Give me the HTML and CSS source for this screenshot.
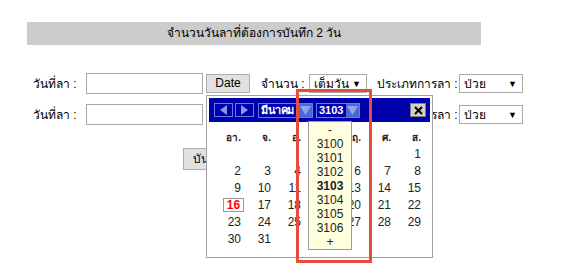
FILE: index.html
```html
<!DOCTYPE html>
<html lang="th">
<head>
    <meta charset="UTF-8">
    <title>บันทึกวันลา</title>
    <link rel="stylesheet" href="styles.css">
</head>
<body>
    <div class="page">
        <div class="title-bar">จำนวนวันลาที่ต้องการบันทึก 2 วัน</div>

        <div class="form-row first">
            <span class="label">วันที่ลา :</span>
            <span class="text-box"></span>
            <span class="btn date-btn">Date</span>
            <span class="label amount">จำนวน :</span>
            <span class="select amount-sel"><em>เต็มวัน</em><b>▼</b></span>
            <span class="label type">ประเภทการลา :</span>
            <span class="select type-sel"><em>ป่วย</em><b>▼</b></span>
        </div>

        <div class="form-row">
            <span class="label">วันที่ลา :</span>
            <span class="text-box"></span>
            <span class="btn date-btn">Date</span>
            <span class="label amount">จำนวน :</span>
            <span class="select amount-sel"><em>เต็มวัน</em><b>▼</b></span>
            <span class="label type">ประเภทการลา :</span>
            <span class="select type-sel"><em>ป่วย</em><b>▼</b></span>
        </div>

        <div class="form-actions">
            <span class="btn save-btn">บันทึก</span>
        </div>
    </div>

    <!-- popup calendar -->
    <div class="cal">
        <div class="cal-head">
            <span class="nav-btn"><svg width="11" height="10" viewBox="0 0 11 10"><polygon points="9,0 9,10 2,5" fill="#7f9be6"/></svg></span>
            <span class="nav-btn"><svg width="11" height="10" viewBox="0 0 11 10"><polygon points="2,0 2,10 9,5" fill="#7f9be6"/></svg></span>
            <span class="head-sel month"><em>มีนาคม</em><i><svg width="11" height="9" viewBox="0 0 11 9"><polygon points="0,0 11,0 5.5,9" fill="#8ea6e8"/></svg></i></span>
            <span class="head-sel year"><em>3103</em><i><svg width="11" height="9" viewBox="0 0 11 9"><polygon points="0,0 11,0 5.5,9" fill="#8ea6e8"/></svg></i></span>
            <span class="close-btn"><svg width="9" height="9" viewBox="0 0 9 9"><path d="M1 1L8 8M8 1L1 8" stroke="#000" stroke-width="2"/></svg></span>
        </div>
        <table class="cal-grid">
            <tr class="dow"><td>อา.</td><td>จ.</td><td>อ.</td><td>พ.</td><td>พฤ.</td><td>ศ.</td><td>ส.</td></tr>
            <tr><td></td><td></td><td></td><td></td><td></td><td></td><td>1</td></tr>
            <tr><td>2</td><td>3</td><td>4</td><td>5</td><td>6</td><td>7</td><td>8</td></tr>
            <tr><td>9</td><td>10</td><td>11</td><td>12</td><td>13</td><td>14</td><td>15</td></tr>
            <tr><td><span class="today">16</span></td><td>17</td><td>18</td><td>19</td><td>20</td><td>21</td><td>22</td></tr>
            <tr><td>23</td><td>24</td><td>25</td><td>26</td><td>27</td><td>28</td><td>29</td></tr>
            <tr><td>30</td><td>31</td><td></td><td></td><td></td><td></td><td></td></tr>
        </table>

        <div class="year-list">
            <div>-</div>
            <div>3100</div>
            <div>3101</div>
            <div>3102</div>
            <div class="cur">3103</div>
            <div>3104</div>
            <div>3105</div>
            <div>3106</div>
            <div>+</div>
        </div>
    </div>

    <div class="mark"></div>
</body>
</html>
```

FILE: styles.css
```css
body {
    margin: 0;
    font-family: Tahoma, "Liberation Sans", "Noto Sans", sans-serif;
    font-size: 12px;
    color: #000;
    background: #fff;
    white-space: nowrap;
}
.page {
    padding-top: 22px;
}
.title-bar {
    margin-left: 27px;
    width: 454px;
    height: 23px;
    line-height: 23px;
    background: #cccccc;
    text-align: center;
}
.form-row {
    display: flex;
    align-items: center;
    height: 21px;
    margin-top: 10px;
    padding-left: 33px;
}
.form-row.first {
    margin-top: 28px;
}
.label {
    width: 53px;
    flex: none;
}
.text-box {
    flex: none;
    width: 115px;
    height: 19px;
    border: 1px solid #a9a9a9;
}
.btn {
    flex: none;
    background: #e1e1e1;
    border: 1px solid #adadad;
    text-align: center;
    line-height: 17px;
    height: 17px;
}
.date-btn {
    width: 42px;
    margin-left: 3px;
}
.label.amount {
    margin-left: 11px;
    width: 48px;
}
.label.type {
    margin-left: 10px;
    width: 82px;
}
.select {
    flex: none;
    display: flex;
    justify-content: space-between;
    align-items: center;
    height: 17px;
    border: 1px solid #a9a9a9;
    padding: 0 5px 0 4px;
    font-size: 12px;
    overflow: hidden;
}
.select em {
    font-style: normal;
}
.select b {
    font-size: 9px;
}
.amount-sel {
    width: 47px;
}
.type-sel {
    width: 53px;
}
.form-actions {
    margin-top: 23px;
    padding-left: 183px;
}
.save-btn {
    display: inline-block;
    width: 48px;
    height: 20px;
    line-height: 20px;
}

/* calendar popup */
.cal {
    position: absolute;
    left: 206px;
    top: 95px;
    width: 221px;
    height: 157px;
    padding: 2px;
    background: #fff;
    border: 1px solid #a0a0a0;
}
.cal-head {
    display: flex;
    align-items: center;
    height: 24px;
    padding-left: 5px;
    background: #0000aa;
}
.nav-btn {
    flex: none;
    display: flex;
    align-items: center;
    justify-content: center;
    width: 17px;
    height: 12px;
    margin-right: 2px;
    border: 1px solid #5c7cf0;
}
.head-sel {
    flex: none;
    display: flex;
    align-items: center;
    height: 13px;
    margin-left: 2px;
    border: 1px solid #5c7cf0;
    color: #fff;
    font-weight: bold;
    font-size: 11px;
    padding-left: 2px;
    overflow: hidden;
}
.head-sel em {
    font-style: normal;
    flex: 1;
}
.head-sel.month {
    width: 51px;
}
.head-sel.month em {
    letter-spacing: -0.4px;
}
.head-sel.year {
    width: 40px;
    margin-left: 3px;
}
.head-sel i {
    flex: none;
    display: flex;
    align-items: center;
    justify-content: center;
    width: 13px;
    height: 13px;
    background: #4a68d8;
}
.close-btn {
    flex: none;
    display: flex;
    align-items: center;
    justify-content: center;
    width: 14px;
    height: 12px;
    margin-left: auto;
    margin-right: 4px;
    background: #d4d0c8;
    border: 1px solid #808080;
}
.cal-grid {
    border-collapse: collapse;
    margin: 7px 0 0 6px;
    font-size: 12px;
    color: #222;
}
.cal-grid td {
    width: 26px;
    height: 17px;
    padding: 0 4px 0 0;
    text-align: right;
}
.cal-grid .dow td {
    font-weight: bold;
    font-size: 10px;
    height: 16px;
}
.today {
    display: inline-block;
    width: 19px;
    height: 12px;
    line-height: 12px;
    border: 1px solid #999;
    text-align: center;
    color: #ff0000;
    font-weight: bold;
    margin-right: -3px;
}
.year-list {
    position: absolute;
    left: 101px;
    top: 25px;
    width: 42px;
    padding-top: 1px;
    background: #ffffe0;
    border: 1px solid #999;
    text-align: center;
    font-size: 12px;
    color: #222;
}
.year-list div {
    height: 14px;
    line-height: 14px;
}
.year-list .cur {
    font-weight: bold;
}

/* red highlight drawn over the screenshot */
.mark {
    position: absolute;
    left: 296px;
    top: 89px;
    width: 70px;
    height: 168px;
    border: 3px solid #e74c3c;
}
```
